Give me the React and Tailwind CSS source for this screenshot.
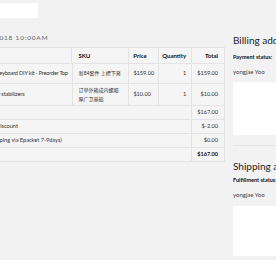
import React from "react";

const font = { fontFamily: "Lato, 'Noto Sans CJK SC', sans-serif" };

function Row({ children, h }) {
  return <div className={`flex border-b border-[#e3e3e3] ${h}`}>{children}</div>;
}

export default function App() {
  return (
    <div className="w-[276px] h-[260px] overflow-hidden bg-[#f2f2f2] text-[#333]" style={font}>
      <div className="flex items-start ml-[-120px]">
        {/* main column */}
        <div className="w-[345px] shrink-0 pt-[3px]">
          <div className="h-[15px] w-[158px] bg-white" />
          <div className="mt-[15px] h-[10px] leading-[10px] text-[6.5px] tracking-[0.8px] text-[#666] pl-[81px] whitespace-nowrap">
            April 12, 2018 10:00AM
          </div>
          <div className="mt-[4px] border-t border-r border-[#e3e3e3] bg-[#f5f5f5] text-[5.6px]">
            <Row h="h-[16px]">
              <div className="w-[193px] border-r border-[#e3e3e3]" />
              <div className="w-[57px] border-r border-[#e3e3e3] pl-[6px] flex items-center font-bold text-[6px] text-[#111]">SKU</div>
              <div className="w-[30px] border-r border-[#e3e3e3] pl-[4px] flex items-center font-bold text-[6px] text-[#111]">Price</div>
              <div className="w-[33px] border-r border-[#e3e3e3] pr-[5px] flex items-center justify-end font-bold text-[6px] text-[#111]">Quantity</div>
              <div className="w-[32px] pr-[6px] flex items-center justify-end font-bold text-[6px] text-[#111]">Total</div>
            </Row>
            <Row h="h-[20px]">
              <div className="w-[193px] border-r border-[#e3e3e3] pl-[116px] flex items-center whitespace-nowrap overflow-hidden tracking-[-0.2px]">Keyboard DIY kit - Preorder Top</div>
              <div className="w-[57px] border-r border-[#e3e3e3] pl-[6px] flex items-center whitespace-nowrap text-[5px]">新84套件 上標下発</div>
              <div className="w-[30px] border-r border-[#e3e3e3] pl-[4px] flex items-center">$159.00</div>
              <div className="w-[33px] border-r border-[#e3e3e3] pr-[5px] flex items-center justify-end">1</div>
              <div className="w-[32px] pr-[6px] flex items-center justify-end">$159.00</div>
            </Row>
            <Row h="h-[22px]">
              <div className="w-[193px] border-r border-[#e3e3e3] pl-[104px] flex items-center whitespace-nowrap overflow-hidden tracking-[-0.1px]">Cherry stabilizers</div>
              <div className="w-[57px] border-r border-[#e3e3e3] pl-[6px] pr-[6px] flex items-center leading-[9px] text-[5px]">订单外箱成内螺帽厚广卫基础</div>
              <div className="w-[30px] border-r border-[#e3e3e3] pl-[4px] flex items-center">$10.00</div>
              <div className="w-[33px] border-r border-[#e3e3e3] pr-[5px] flex items-center justify-end">1</div>
              <div className="w-[32px] pr-[6px] flex items-center justify-end">$10.00</div>
            </Row>
            {[
              ["Subtotal", "$167.00", false, "pl-[8px]"],
              ["Discount", "$-2.00", false, "pl-[116px]"],
              ["Shipping (Shipping via Epacket 7-9days)", "$0.00", false, "pl-[85px]"],
              ["Total", "$167.00", true, "pl-[8px]"],
            ].map(([l, v, b, p]) => (
              <Row key={l} h="h-[14px]">
                <div className={`w-[313px] border-r border-[#e3e3e3] ${p} flex items-center whitespace-nowrap`}>{l}</div>
                <div className={`w-[32px] pr-[6px] flex items-center justify-end ${b ? "font-bold text-[#111]" : ""}`}>{v}</div>
              </Row>
            ))}
          </div>
        </div>
        {/* right column */}
        <div className="ml-[8px] w-[160px] shrink-0 pt-[33px]">
          <div className="text-[10px] leading-[14px] text-[#222] whitespace-nowrap">Billing address</div>
          <div className="mt-[6px] text-[5.5px] leading-[8px] font-bold text-[#111] whitespace-nowrap">Payment status:</div>
          <div className="mt-[7px] text-[6px] leading-[8px] text-[#444]">yongjae Yoo</div>
          <div className="mt-[6px] h-[53px] bg-white" />
          <div className="mt-[10px] border-t border-[#e6e6e6]" />
          <div className="mt-[13px] text-[10px] leading-[14px] text-[#222] whitespace-nowrap">Shipping address</div>
          <div className="mt-[3px] text-[5.5px] leading-[8px] font-bold text-[#111] whitespace-nowrap">Fulfillment status:</div>
          <div className="mt-[7px] text-[6px] leading-[8px] text-[#444]">yongjae Yoo</div>
          <div className="mt-[7px] h-[50px] bg-white" />
        </div>
      </div>
    </div>
  );
}
